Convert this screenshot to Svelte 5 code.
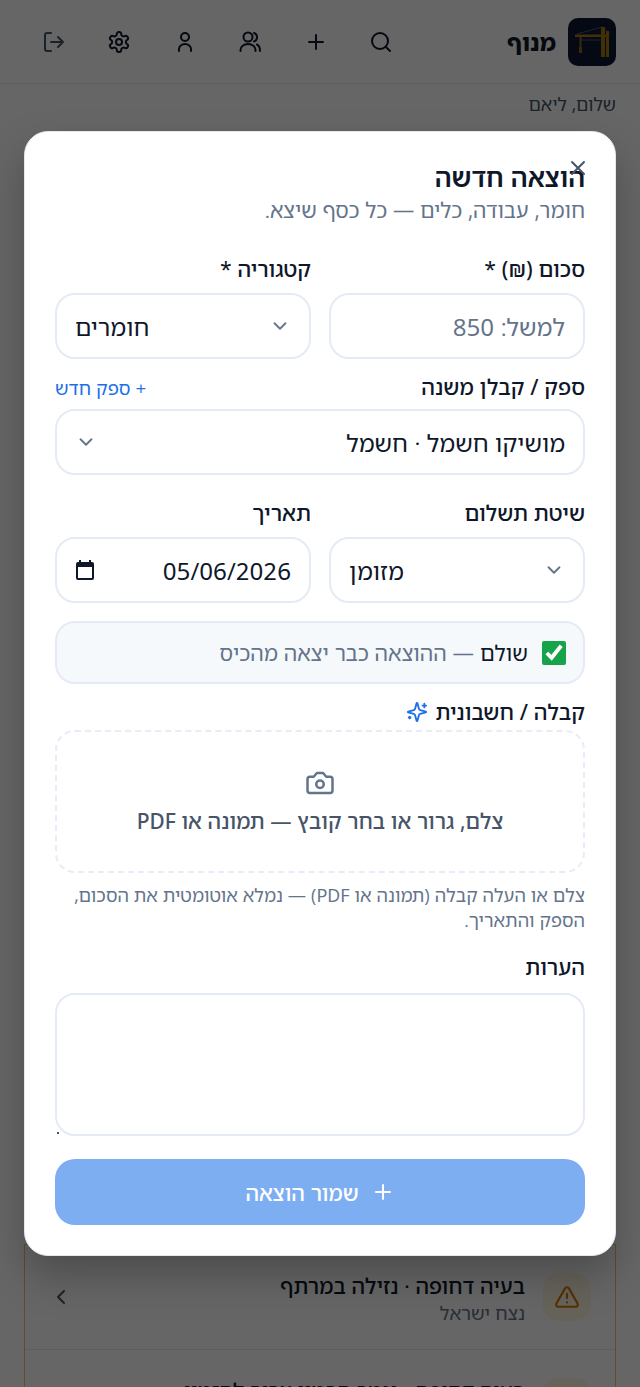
<script lang="ts">
  let amount = $state("");
  let notes = $state("");
  let paid = $state(true);

  const issues = [
    { title: "בעיה דחופה · נזילה במרתף", who: "נצח ישראל" },
    { title: "בעיה דחופה · נגמר הבטון צריך להזמין", who: "נצח ישראל" }
  ];
</script>

<div class="page" dir="rtl">
  <header class="topbar">
    <div class="brand">
      <div class="logo">
        <svg viewBox="0 0 48 48" width="48" height="48" fill="none">
          <path d="M7 16.500h34v2.500H7z" fill="#a87512" />
          <path d="M33 9h4v30h-4zM38 13h3v26h-3z" fill="#a87512" />
          <path d="M9 16L34 9l8 7M12 22h24" stroke="#64748b" stroke-width=".7" />
          <path d="M12.500 19v11" stroke="#8a6a20" stroke-width="2" />
          <path d="M11 29h3v6h-3z" fill="#8a6a20" />
        </svg>
      </div>
      <span class="brand-name">מנוף</span>
    </div>
    <nav class="nav">
      <svg class="ic" viewBox="0 0 24 24"><circle cx="11" cy="11" r="8" /><path d="m21 21-4.300-4.300" /></svg>
      <svg class="ic" viewBox="0 0 24 24"><path d="M5 12h14M12 5v14" /></svg>
      <svg class="ic" viewBox="0 0 24 24"><circle cx="10" cy="7" r="4.500" /><path d="M2.500 21v-1a7.500 6 0 0 1 15 0v1M16 3a4.500 4.500 0 0 1 0 8.500M19 14.500c2 1 3 3 3 6.500" /></svg>
      <svg class="ic" viewBox="0 0 24 24"><circle cx="12" cy="7" r="4" /><path d="M6 21v-2a6 5 0 0 1 12 0v2" /></svg>
      <svg class="ic" viewBox="0 0 24 24"><path d="M12.220 2h-.440a2 2 0 0 0-2 2v.180a2 2 0 0 1-1 1.730l-.430.250a2 2 0 0 1-2 0l-.150-.080a2 2 0 0 0-2.730.730l-.220.380a2 2 0 0 0 .730 2.730l.150.100a2 2 0 0 1 1 1.720v.510a2 2 0 0 1-1 1.740l-.150.090a2 2 0 0 0-.730 2.730l.220.380a2 2 0 0 0 2.730.730l.150-.080a2 2 0 0 1 2 0l.430.250a2 2 0 0 1 1 1.730V20a2 2 0 0 0 2 2h.440a2 2 0 0 0 2-2v-.180a2 2 0 0 1 1-1.730l.430-.250a2 2 0 0 1 2 0l.150.080a2 2 0 0 0 2.730-.730l.220-.390a2 2 0 0 0-.730-2.730l-.150-.080a2 2 0 0 1-1-1.740v-.500a2 2 0 0 1 1-1.740l.150-.090a2 2 0 0 0 .730-2.730l-.220-.380a2 2 0 0 0-2.730-.730l-.150.080a2 2 0 0 1-2 0l-.430-.250a2 2 0 0 1-1-1.730V4a2 2 0 0 0-2-2z" /><circle cx="12" cy="12" r="3" /></svg>
      <svg class="ic dim" viewBox="0 0 24 24"><path d="M9 21H5a2 2 0 0 1-2-2V5a2 2 0 0 1 2-2h4M16 17l5-5-5-5M21 12H9" /></svg>
    </nav>
  </header>

  <p class="hello">שלום, ליאם</p>

  <section class="issues">
    {#each issues as issue}
      <div class="issue">
        <div class="warn">
          <svg viewBox="0 0 24 24" width="26" height="26" fill="none" stroke="#d97706" stroke-width="2" stroke-linecap="round" stroke-linejoin="round"><path d="m21.730 18-8-14a2 2 0 0 0-3.480 0l-8 14A2 2 0 0 0 4 21h16a2 2 0 0 0 1.730-3M12 9v4M12 17h.010" /></svg>
        </div>
        <div class="issue-text">
          <div class="issue-title">{issue.title}</div>
          <div class="issue-who">{issue.who}</div>
        </div>
        <svg class="ic back" viewBox="0 0 24 24"><path d="m15 18-6-6 6-6" /></svg>
      </div>
    {/each}
  </section>

  <div class="overlay"></div>

  <form class="modal" onsubmit={(e) => e.preventDefault()}>
    <button type="button" class="close" aria-label="סגור">
      <svg viewBox="0 0 24 24" width="24" height="24"><path d="M18 6 6 18M6 6l12 12" /></svg>
    </button>
    <h2 class="title">הוצאה חדשה</h2>
    <p class="sub">חומר, עבודה, כלים — כל כסף שיצא.</p>

    <div class="two first">
      <div class="field">
        <span class="label">סכום (₪) *</span>
        <input class="box" placeholder="למשל: 850" bind:value={amount} />
      </div>
      <div class="field">
        <span class="label">קטגוריה *</span>
        <div class="box select flip">
          <span>חומרים</span>
          <svg class="chev" viewBox="0 0 24 24"><path d="m6 9 6 6 6-6" /></svg>
        </div>
      </div>
    </div>

    <div class="field supplier">
      <div class="label-row">
        <span class="label">ספק / קבלן משנה</span>
        <span class="new-link">+ ספק חדש</span>
      </div>
      <div class="box select">
        <span>מושיקו חשמל · חשמל</span>
        <svg class="chev" viewBox="0 0 24 24"><path d="m6 9 6 6 6-6" /></svg>
      </div>
    </div>

    <div class="two third">
      <div class="field">
        <span class="label">שיטת תשלום</span>
        <div class="box select flip">
          <span>מזומן</span>
          <svg class="chev" viewBox="0 0 24 24"><path d="m6 9 6 6 6-6" /></svg>
        </div>
      </div>
      <div class="field">
        <span class="label">תאריך</span>
        <div class="box date">
          <span class="date-val">05/06/2026</span>
          <svg viewBox="0 0 24 24" width="24" height="24" fill="#0f172a"><path d="M19 4h-1V2h-2v2H8V2H6v2H5a2 2 0 0 0-2 2v14a2 2 0 0 0 2 2h14a2 2 0 0 0 2-2V6a2 2 0 0 0-2-2zm0 16H5V9h14z" /></svg>
        </div>
      </div>
    </div>

    <label class="paid">
      <input type="checkbox" bind:checked={paid} />
      <span><b>שולם</b> — ההוצאה כבר יצאה מהכיס</span>
    </label>

    <div class="receipt-label">
      <span class="label">קבלה / חשבונית</span>
      <svg viewBox="0 0 24 24" width="22" height="22" fill="none" stroke="#1d6fe8" stroke-width="2" stroke-linecap="round" stroke-linejoin="round"><path d="M9.940 15.500A2 2 0 0 0 8.500 14.060l-6.140-1.580a.5.5 0 0 1 0-.960L8.500 9.940A2 2 0 0 0 9.940 8.500l1.580-6.140a.5.5 0 0 1 .960 0L14.060 8.500A2 2 0 0 0 15.500 9.940l6.140 1.580a.5.5 0 0 1 0 .960L15.500 14.060a2 2 0 0 0-1.440 1.440l-1.580 6.140a.5.5 0 0 1-.960 0zM20 3v4M22 5h-4M4 17v2M5 18H3" /></svg>
    </div>
    <div class="drop">
      <svg viewBox="0 0 24 24" width="30" height="30" fill="none" stroke="#64748b" stroke-width="2" stroke-linecap="round" stroke-linejoin="round"><path d="M14.500 4h-5L7 7H4a2 2 0 0 0-2 2v9a2 2 0 0 0 2 2h16a2 2 0 0 0 2-2V9a2 2 0 0 0-2-2h-3z" /><circle cx="12" cy="13" r="3" /></svg>
      <span>צלם, גרור או בחר קובץ — תמונה או PDF</span>
    </div>
    <p class="hint">צלם או העלה קבלה (תמונה או PDF) — נמלא אוטומטית את הסכום, הספק והתאריך.</p>

    <span class="label notes-label">הערות</span>
    <div class="notes-wrap">
      <textarea class="notes" bind:value={notes}></textarea>
    </div>

    <button type="submit" class="save">
      <svg viewBox="0 0 24 24" width="24" height="24"><path d="M5 12h14M12 5v14" /></svg>
      <span>שמור הוצאה</span>
    </button>
  </form>
</div>

<style>
  :global(body) {
    margin: 0;
    background: #fff;
  }

  .page {
    position: relative;
    height: 1387px;
    overflow: hidden;
    background: #fff;
    font-family: "Noto Sans Hebrew", "Noto Sans", "Open Sans", sans-serif;
    color: #0f172a;
  }

  .topbar {
    height: 83px;
    display: flex;
    align-items: center;
    justify-content: space-between;
    padding: 0 24px 0 42px;
    background: #fff;
    border-bottom: 1px solid #e2e8f0;
  }
  .brand {
    display: flex;
    align-items: center;
    gap: 12px;
  }
  .logo {
    width: 48px;
    height: 48px;
    border-radius: 10px;
    background: #0b1730;
    overflow: hidden;
  }
  .brand-name {
    font-size: 23px;
    font-weight: 800;
  }
  .nav {
    display: flex;
    gap: 41.400px;
  }
  .ic {
    width: 24px;
    height: 24px;
    fill: none;
    stroke: #0f172a;
    stroke-width: 2;
    stroke-linecap: round;
    stroke-linejoin: round;
  }
  .ic.dim,
  .ic.back {
    stroke: #475569;
  }

  .hello {
    margin: 8px 24px 0;
    font-size: 18px;
    color: #475569;
  }

  .issues {
    position: absolute;
    top: 1244px;
    left: 24px;
    right: 24px;
    background: #fff;
    border: 1px solid #f2c063;
  }
  .issue {
    box-sizing: border-box;
    height: 105px;
    display: flex;
    align-items: center;
    gap: 18px;
    padding: 0 24px;
    border-bottom: 1px solid #e2e8f0;
  }
  .warn {
    width: 48px;
    height: 48px;
    border-radius: 16px;
    background: #fff7e3;
    display: flex;
    align-items: center;
    justify-content: center;
  }
  .issue-text {
    flex: 1;
    padding-top: 3px;
  }
  .issue-title {
    font-size: 21.300px;
    font-weight: 500;
    line-height: 28px;
  }
  .issue-who {
    font-size: 18.700px;
    line-height: 26px;
    color: #64748b;
  }

  .overlay {
    position: absolute;
    inset: 0;
    background: rgba(0, 0, 0, 0.6);
  }

  .modal {
    position: absolute;
    top: 131px;
    left: 24px;
    width: 592px;
    height: 1125px;
    box-sizing: border-box;
    padding: 27px 30px 0;
    background: #fff;
    border: 1px solid #e2e8f0;
    border-radius: 24px;
    box-shadow: 0 20px 40px rgba(0, 0, 0, 0.25);
  }
  .close {
    position: absolute;
    top: 24px;
    right: 25px;
    padding: 0;
    border: 0;
    background: none;
    line-height: 0;
  }
  .close svg {
    fill: none;
    stroke: #475569;
    stroke-width: 2;
    stroke-linecap: round;
  }
  .title {
    margin: 0;
    font-size: 26px;
    font-weight: 600;
    line-height: 36px;
  }
  .sub {
    margin: 0;
    font-size: 21.300px;
    line-height: 30px;
    color: #64748b;
  }

  .two {
    display: grid;
    grid-template-columns: 1fr 1fr;
    gap: 18px;
  }
  .first {
    margin-top: 30px;
  }
  .supplier {
    margin-top: 14px;
  }
  .third {
    margin-top: 24px;
  }

  .field {
    display: flex;
    flex-direction: column;
    gap: 10px;
  }
  .supplier.field {
    gap: 8px;
  }
  .label {
    font-size: 21.500px;
    font-weight: 500;
    line-height: 28px;
  }
  .label-row {
    display: flex;
    align-items: center;
    justify-content: space-between;
  }
  .new-link {
    font-size: 18.600px;
    color: #1d6fe8;
  }

  .box {
    box-sizing: border-box;
    width: 100%;
    height: 66px;
    padding: 0 18px;
    font: inherit;
    font-size: 24px;
    color: #0f172a;
    background: #fff;
    border: 2px solid #e4ebf4;
    border-radius: 20px;
    outline: none;
  }
  .box::placeholder {
    color: #64748b;
    opacity: 1;
  }
  .select,
  .date {
    display: flex;
    align-items: center;
    justify-content: space-between;
  }
  .date svg {
    margin-left: -2px;
  }
  .select.flip {
    flex-direction: row-reverse;
  }
  .chev {
    width: 22px;
    height: 22px;
    fill: none;
    stroke: #64748b;
    stroke-width: 2;
    stroke-linecap: round;
    stroke-linejoin: round;
  }
  .date-val {
    direction: ltr;
  }

  .paid {
    box-sizing: border-box;
    display: flex;
    align-items: center;
    gap: 14px;
    height: 63px;
    margin-top: 18px;
    padding: 0 17px;
    font-size: 21.500px;
    color: #64748b;
    background: #f6f9fc;
    border: 2px solid #e4ebf4;
    border-radius: 20px;
  }
  .paid input {
    width: 24px;
    height: 24px;
    margin: 0;
    accent-color: #16a34a;
  }
  .paid b {
    font-weight: 400;
    color: #0f172a;
  }

  .receipt-label {
    display: flex;
    align-items: center;
    gap: 8px;
    margin-top: 14px;
  }
  .drop {
    box-sizing: border-box;
    height: 143px;
    margin-top: 4px;
    display: flex;
    flex-direction: column;
    align-items: center;
    justify-content: center;
    gap: 8px;
    font-size: 21.300px;
    font-weight: 500;
    color: #475569;
    border: 2px dashed #e6edf7;
    border-radius: 20px;
  }
  .hint {
    margin: 9px 0 0;
    font-size: 18.300px;
    line-height: 25px;
    color: #64748b;
  }
  .notes-label {
    display: block;
    margin-top: 21px;
  }
  .notes-wrap {
    position: relative;
    margin-top: 12px;
  }
  .notes-wrap::after {
    content: "";
    position: absolute;
    left: 2px;
    bottom: 2px;
    width: 2px;
    height: 2px;
    background: #475569;
  }
  .notes {
    display: block;
    box-sizing: border-box;
    width: 100%;
    height: 143px;
    font: inherit;
    background: #fff;
    border: 2px solid #e4ebf4;
    border-radius: 20px;
    outline: none;
    resize: none;
  }
  .save {
    width: 100%;
    height: 66px;
    margin-top: 23px;
    display: flex;
    align-items: center;
    justify-content: center;
    gap: 12px;
    font: inherit;
    font-size: 21.300px;
    font-weight: 500;
    color: #fff;
    background: #7eaef2;
    border: 0;
    border-radius: 20px;
  }
  .save svg {
    fill: none;
    stroke: #fff;
    stroke-width: 2;
    stroke-linecap: round;
  }
</style>
